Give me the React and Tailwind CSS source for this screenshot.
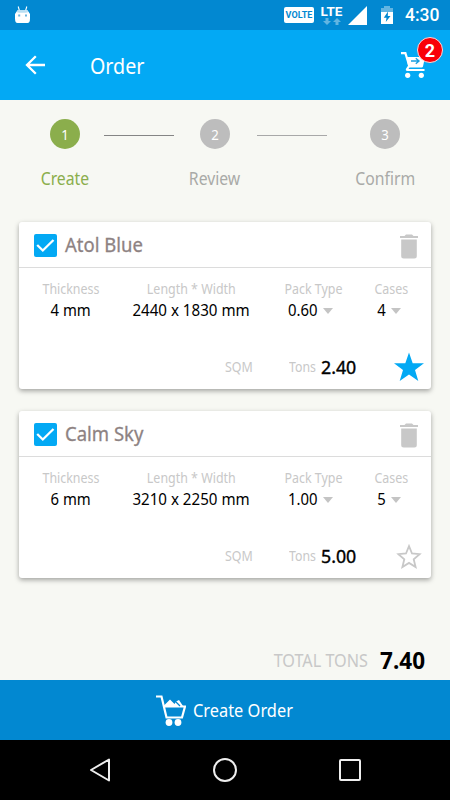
const steps = [
  { number: 1, title: "Create", circle: "bg-[#8bae4c]", label: "text-[#8bae4c]" },
  { number: 2, title: "Review", circle: "bg-[#bdbdbd]", label: "text-[#a9aaa7]" },
  { number: 3, title: "Confirm", circle: "bg-[#bdbdbd]", label: "text-[#a9aaa7]" },
];

const orders = [
  { name: "Atol Blue", thickness: "4 mm", size: "2440 x 1830 mm", pack: "0.60", cases: "4", tons: "2.40", starred: true },
  { name: "Calm Sky", thickness: "6 mm", size: "3210 x 2250 mm", pack: "1.00", cases: "5", tons: "5.00", starred: false },
];

const StatusBar = () => (
  <div className="flex h-[30px] items-center bg-[#0288d1] pl-[15px] pr-[10px]">
    <svg className="h-[18px] w-[15px]" viewBox="0 0 15 18">
      <path d="M3.2 0.5 4.5 5M11.8 0.5 10.5 5" stroke="#fff" strokeWidth="1.1" />
      <path d="M2.5 4.2h10L15 8v4.5Q15 17 12.5 17h-10Q0 17 0 12.5V8z" fill="#fff" />
      <path d="M2.8 4.2h9.4l1 2q-5.7 1.2-11.4 0z" fill="#b9dff3" />
      <path d="M3.2 8.5h2v2h-2zM10 8.5h2v2h-2z" fill="#6bb6df" />
    </svg>
    <div className="ml-auto flex h-[16px] w-[30px] items-center justify-center rounded-[2px] bg-white pt-px font-[Roboto] text-[9px] font-bold tracking-[0.1px] text-[#0288d1]">
      VOLTE
    </div>
    <div className="ml-[6px] flex w-[23px] flex-col items-center">
      <span className="font-[Roboto] text-[13.5px] font-bold leading-[11px] text-white">LTE</span>
      <svg className="mt-[1px] h-[7px] w-[18px]" viewBox="0 0 18 7" fill="#62b5e2">
        <path d="M2.5 0h3v3H8L4 7 0 3h2.5zM12.5 7h3V4H18l-4-4-4 4h2.5z" />
      </svg>
    </div>
    <svg className="ml-[5px] h-[19px] w-[19px]" viewBox="0 0 19 19">
      <path d="M19 0v19H0z" fill="#fff" />
    </svg>
    <svg className="ml-[14px] h-[18px] w-[12px]" viewBox="0 0 12 18">
      <path d="M0 2h3V0h6v2h3v4H0z" fill="#62b5e2" />
      <path d="M0 6h12v12H0z" fill="#fff" />
      <path d="M7 5.5 2.8 11.8h2.7L4.8 16l4.700-6H6.800z" fill="#0288d1" />
    </svg>
    <span className="ml-[12px] w-[35px] font-[Roboto] text-[17.5px] font-medium leading-[32px] text-white">4:30</span>
  </div>
);

const Header = () => (
  <header className="flex h-[70px] items-center bg-[#03a9f4] pl-[25px] pr-[21px]">
    <svg className="h-5 w-5" viewBox="0 0 20 20" fill="none" stroke="#fff" strokeWidth="2.3">
      <path d="M20 10H2M10.8 1.2 2 10l8.8 8.8" />
    </svg>
    <h1 className="ml-[45px] origin-left scale-x-[0.915] text-[21.5px] leading-[69px] text-white">Order</h1>
    <div className="relative ml-auto h-[26px] w-[28px]">
      <svg className="h-[26px] w-[28px]" viewBox="0 0 28 26">
        <path d="M0 1.2h4.4L8.5 14.5" fill="none" stroke="#fff" strokeWidth="2.2" />
        <path d="M5.5 5H24l-2 9.5q-.3 1-1.5 1H8.5L7.5 17h16v2h-17Q4.2 19 5 16.8l2-3z" fill="#fff" />
        <path d="M10 9h8M14.8 6.2 18 9l-3.2 2.8" fill="none" stroke="#1a9fe0" strokeWidth="1.4" />
        <circle cx="6.7" cy="23.3" r="2.6" fill="#fff" />
        <circle cx="20.3" cy="23.3" r="2.6" fill="#fff" />
      </svg>
      <span className="absolute -top-[15px] left-[16px] flex h-[26px] w-[26px] items-center justify-center rounded-full border-[1.5px] border-[#ffd9d9] bg-[#f90008] pt-px font-[Roboto] text-[18px] font-bold leading-none text-white">
        2
      </span>
    </div>
  </header>
);

const Step = ({ step }) => (
  <div className="flex w-20 flex-col items-center">
    <span className={`flex h-[30px] w-[30px] items-center justify-center rounded-full text-[14.5px] leading-none text-white ${step.circle}`}>
      <span className="scale-x-[0.91]">{step.number}</span>
    </span>
    <span className={`mt-[17px] scale-x-[0.9] text-[17.5px] leading-6 ${step.label}`}>{step.title}</span>
  </div>
);

const Stepper = () => (
  <div className="flex pl-[25px] pt-[19px]">
    <Step step={steps[0]} />
    <div className="-ml-px mr-px mt-[16px] h-px w-[70px] bg-[#858585]" />
    <Step step={steps[1]} />
    <div className="ml-[2px] mr-[18px] mt-[16px] h-px w-[70px] bg-[#a8a8a8]" />
    <Step step={steps[2]} />
  </div>
);

const Caret = () => (
  <svg className="ml-[4px] h-[6px] w-[10px]" viewBox="0 0 10 6">
    <path d="M0 0h10L5 6z" fill="#c4c4c4" />
  </svg>
);

const Field = ({ label, width, children }) => (
  <div className={`flex flex-col items-center ${width}`}>
    <span className="scale-x-[0.92] whitespace-nowrap text-[13.5px] leading-[18px] text-[#c8c8c8]">{label}</span>
    <div className="mt-px flex h-[23px] items-center whitespace-nowrap text-[16px] leading-[23px] text-black">{children}</div>
  </div>
);

const Star = ({ starred }) => (
  <svg className="h-[30px] w-[32px]" viewBox="0 0 32 30">
    {starred ? (
      <path d="M16 0.5 19.7 11.2H31L22 18l3.3 11L16 22.5 6.7 29 10 18 1 11.2h11.3z" fill="#03a9f4" />
    ) : (
      <path d="M16 5.2 19 12.5l7.6.7-5.900 5.100 1.900 7.700-6.600-4.100L9.400 26l1.900-7.700-5.900-5.100 7.600-.7z" fill="none" stroke="#c8c8c8" strokeWidth="1.8" />
    )}
  </svg>
);

const OrderCard = ({ order }) => (
  <section className="flex h-[167px] flex-col rounded-[3px] bg-white shadow-[0_2px_5px_rgba(0,0,0,0.35)]">
    <div className="flex h-[46px] items-center border-b border-[#dcdcdc] pl-[15px] pr-[13px] pt-[2px]">
      <svg className="h-[23px] w-[23px]" viewBox="0 0 23 23">
        <rect width="23" height="23" rx="2" fill="#03a9f4" />
        <path d="M3.2 11 8.8 16.5 19.5 6" fill="none" stroke="#fff" strokeWidth="2.3" />
      </svg>
      <h2 className="mb-[2px] ml-2 origin-left scale-x-[0.925] text-[20px] font-normal leading-6 text-[#8d8282] [-webkit-text-stroke:0.3px]">{order.name}</h2>
      <svg className="ml-auto mt-px h-[25px] w-[18px]" viewBox="0 0 18 25" fill="#c8c8c8">
        <path d="M0 2h4.500L6 .5h6L13.500 2H18v2H0zM1.200 5.500h15.600V22q0 2.500-2.500 2.500H3.700Q1.200 24.500 1.200 22z" />
      </svg>
    </div>
    <div className="flex pt-[12px]">
      <Field label="Thickness" width="w-[104px]">
        <span className="scale-x-[0.93]">{order.thickness}</span>
      </Field>
      <Field label="Length * Width" width="w-[137px]">
        <span className="scale-x-[0.945]">{order.size}</span>
      </Field>
      <Field label="Pack Type" width="w-[106px]">
        <span className="-ml-[6px] scale-x-[0.93]">{order.pack}</span>
        <Caret />
      </Field>
      <Field label="Cases" width="w-[50px]">
        <span className="-ml-[4px] scale-x-[0.93]">{order.cases}</span>
        <Caret />
      </Field>
    </div>
    <div className="mt-auto flex h-[45px] items-center pl-[206px] text-[13.5px] text-[#c8c8c8]">
      <span className="mt-px w-[64px] origin-left scale-x-[0.92]">SQM</span>
      <span className="mt-px w-[32px] origin-left scale-x-[0.91]">Tons</span>
      <span className="w-[72px] origin-left scale-x-[0.96] text-[18.5px] leading-[26px] text-black [-webkit-text-stroke:0.4px]">{order.tons}</span>
      <Star starred={order.starred} />
    </div>
  </section>
);

const BottomBar = () => (
  <button className="flex h-[60px] w-full items-center bg-[#0288d1] pl-[156px] text-white">
    <svg className="h-[31px] w-[30px]" viewBox="0 0 30 31">
      <path d="M0 1.5h5.500L10.500 22.500H26L29 11.500H8" fill="none" stroke="#fff" strokeWidth="2.200" />
      <path d="M7.500 11 14 4.500l4.500 4.500L20 6.500l3-1.500 4 6z" fill="#fff" />
      <path d="m19 6 5 5" stroke="#0288d1" strokeWidth="1.200" />
      <circle cx="13" cy="27.500" r="3.400" fill="#fff" />
      <circle cx="22" cy="27.500" r="3.400" fill="#fff" />
    </svg>
    <span className="mb-px ml-[7px] origin-left scale-x-[0.885] text-[18.5px] leading-[58px]">Create Order</span>
  </button>
);

const NavBar = () => (
  <nav className="flex h-[60px] items-center bg-black pl-[88px]">
    <svg className="h-6 w-6" viewBox="0 0 24 24" fill="none" stroke="#eee" strokeWidth="2">
      <path d="M21 1.500v21L3 12z" strokeLinejoin="round" />
    </svg>
    <div className="ml-[101px] h-6 w-6 rounded-full border-2 border-[#eee]" />
    <div className="ml-[102px] h-[22px] w-[22px] rounded-[2px] border-2 border-[#eee]" />
  </nav>
);

const App = () => {
  return (
    <div className="flex h-[800px] w-[450px] flex-col overflow-hidden bg-[#f7f8f3] font-['Noto_Sans',sans-serif]">
      <StatusBar />
      <Header />
      <Stepper />
      <main className="mt-[32px] flex flex-col gap-[22px] px-[19px]">
        {orders.map((order) => (
          <OrderCard key={order.name} order={order} />
        ))}
      </main>
      <div className="mt-auto flex h-[39px] items-center justify-end pr-[25px]">
        <span className="origin-right scale-x-[0.925] text-[17.5px] text-[#c8c8c8]">TOTAL TONS</span>
        <span className="ml-[12px] text-[22.5px] font-bold text-black">7.40</span>
      </div>
      <BottomBar />
      <NavBar />
    </div>
  );
};

export default App;
